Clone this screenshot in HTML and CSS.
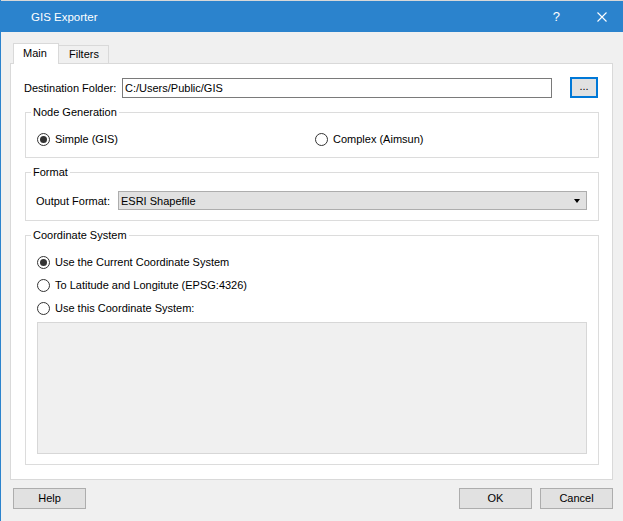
FILE: index.html
```html
<!DOCTYPE html>
<html>
<head>
<meta charset="utf-8">
<title>GIS Exporter</title>
<link rel="stylesheet" href="styles.css">
</head>
<body>
<div class="window">
  <div class="strip"></div>
  <div class="titlebar">
    <span class="title">GIS Exporter</span>
    <span class="qmark">?</span>
    <svg class="close" width="10" height="10" viewBox="0 0 10 10"><path d="M0.5 0.5 L9.5 9.5 M9.5 0.5 L0.5 9.5" stroke="#fff" stroke-width="1.1" fill="none"/></svg>
  </div>
  <div class="content">
    <div class="tabs">
      <div class="tab active">Main</div>
      <div class="tab">Filters</div>
    </div>
    <div class="pane">
      <div class="dest-row">
        <span class="dest-label">Destination Folder:</span>
        <div class="input">C:/Users/Public/GIS</div>
        <div class="browse">...</div>
      </div>
      <fieldset class="group node">
        <legend>Node Generation</legend>
        <div class="node-row">
          <label class="radio"><span class="dot checked"></span>Simple (GIS)</label>
          <label class="radio"><span class="dot"></span>Complex (Aimsun)</label>
        </div>
      </fieldset>
      <fieldset class="group format">
        <legend>Format</legend>
        <div class="format-row">
          <span class="format-label">Output Format:</span>
          <div class="combo"><span>ESRI Shapefile</span><span class="arrow"></span></div>
        </div>
      </fieldset>
      <fieldset class="group coord">
        <legend>Coordinate System</legend>
        <div class="coord-list">
          <label class="radio"><span class="dot checked"></span>Use the Current Coordinate System</label>
          <label class="radio"><span class="dot"></span>To Latitude and Longitute (EPSG:4326)</label>
          <label class="radio"><span class="dot"></span>Use this Coordinate System:</label>
        </div>
        <div class="textarea"></div>
      </fieldset>
    </div>
    <div class="buttons">
      <div class="btn">Help</div>
      <div class="spacer"></div>
      <div class="btn">OK</div>
      <div class="btn">Cancel</div>
    </div>
  </div>
</div>
</body>
</html>
```
FILE: styles.css
```css
* { box-sizing: border-box; }
html, body { margin: 0; padding: 0; }
body {
  width: 623px;
  height: 521px;
  overflow: hidden;
  background: #f0f0f0;
  font-family: "Liberation Sans", Arial, sans-serif;
  font-size: 11px;
  color: #000;
  white-space: nowrap;
}
.window {
  width: 623px;
  height: 521px;
  border-left: 1px solid #2b83cd;
  display: flex;
  flex-direction: column;
}
.strip { height: 1px; background: #d8d8d8; }
.titlebar {
  height: 31px;
  background: #2b83cd;
  color: #fff;
  display: flex;
  align-items: center;
  padding-left: 30px;
}
.title { flex: 1; font-size: 11.5px; }
.qmark { font-size: 13px; margin-right: 37px; }
.close { margin-right: 16px; display: block; }
.content { padding: 11px 10px 0 9px; }
.tabs { display: flex; height: 20px; padding-left: 3px; align-items: flex-end; }
.tab {
  height: 18px;
  border: 1px solid #d9d9d9;
  border-bottom: none;
  background: #f0f0f0;
  line-height: 17px;
  width: 50px;
  padding-left: 10px;
  border-left: none;
}
.tab.active {
  height: 21px;
  width: 46px;
  background: #fff;
  border-left: 1px solid #d9d9d9;
  margin-bottom: -1px;
  position: relative;
  z-index: 1;
  line-height: 19px;
  padding-left: 9px;
}
.pane {
  height: 417px;
  border: 1px solid #d9d9d9;
  background: #fff;
  padding: 13px 0 0 13px;
}
.dest-row { display: flex; align-items: center; height: 21px; }
.dest-label { width: 98px; }
.input {
  width: 430px;
  height: 20px;
  border: 1px solid #7a7a7a;
  line-height: 18px;
  padding-left: 2px;
}
.browse {
  margin-left: 18px;
  width: 28px;
  height: 21px;
  border: 2px solid #0078d7;
  background: #e1e1e1;
  text-align: center;
  line-height: 14px;
}
.group {
  margin: 7px 0 0 1px;
  width: 574px;
  border: 1px solid #dcdcdc;
  min-width: 0;
}
.group legend {
  padding: 0 2px;
  line-height: 14px;
}
.node { padding: 13px 11px 11px 11px; }
.node legend { margin-left: -6px; }
.node-row { display: grid; grid-template-columns: 278px 1fr; }
.radio { display: flex; align-items: center; height: 14px; }
.dot {
  width: 13px;
  height: 13px;
  border: 1px solid #333;
  border-radius: 50%;
  margin-right: 5px;
  display: flex;
  align-items: center;
  justify-content: center;
  background: #fff;
}
.dot.checked::after {
  content: "";
  width: 7px;
  height: 7px;
  border-radius: 50%;
  background: #333;
}
.format { padding: 12px 10px 10px 10px; }
.format legend { margin-left: -5px; }
.format-row { display: flex; align-items: center; }
.format-label { width: 82px; }
.combo {
  width: 469px;
  height: 19px;
  background: #e1e1e1;
  border: 1px solid #adadad;
  display: flex;
  align-items: center;
  justify-content: space-between;
  padding: 0 6px 0 2px;
}
.arrow {
  width: 0; height: 0;
  border-left: 3.5px solid transparent;
  border-right: 3.5px solid transparent;
  border-top: 4px solid #000;
}
.coord { padding: 13px 10px 10px 11px; }
.coord legend { margin-left: -6px; }
.coord-list { display: flex; flex-direction: column; gap: 9px; }
.textarea {
  margin-top: 7px;
  width: 550px;
  height: 132px;
  background: #f0f0f0;
  border: 1px solid #d7d7d7;
}
.buttons { display: flex; margin-top: 8px; padding-left: 3px; gap: 8px; }
.spacer { flex: 1; }
.btn {
  width: 73px;
  height: 21px;
  background: #e1e1e1;
  border: 1px solid #adadad;
  text-align: center;
  line-height: 19px;
}
```
